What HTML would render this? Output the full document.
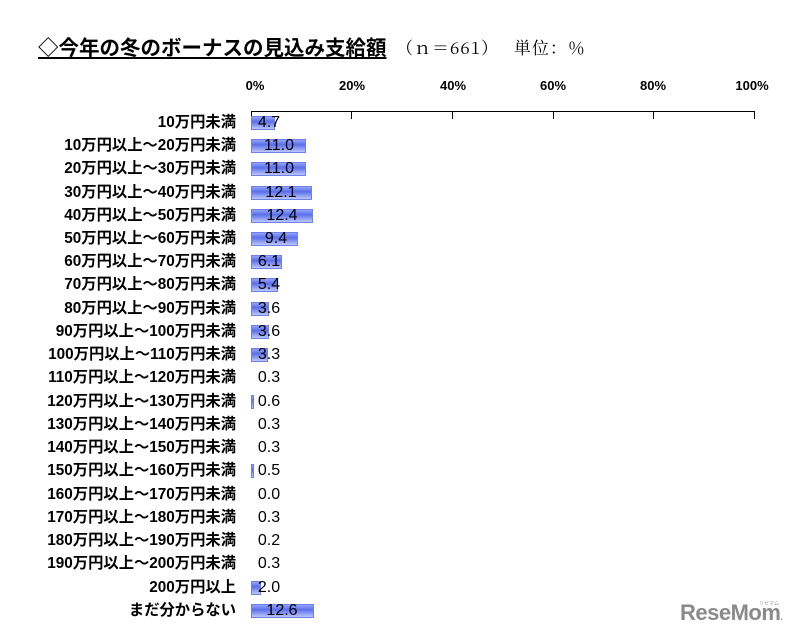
<!DOCTYPE html>
<html><head><meta charset="utf-8"><style>
body{margin:0;width:791px;height:637px;background:#fff;position:relative;overflow:hidden;font-family:"Liberation Sans","Noto Sans CJK JP",sans-serif;color:#000}
.a{position:absolute;white-space:nowrap}
.t{left:38px;top:31px;font-size:20.5px;font-weight:bold;text-decoration:underline;letter-spacing:0px}
.u{left:396px;top:34px;font-size:17px;letter-spacing:1px;font-family:"Noto Serif CJK SC","Liberation Serif",serif}
.x{top:78px;width:60px;text-align:center;font-size:13px;font-weight:bold;margin-left:-30px}
.l{right:555px;font-size:15.3px;font-weight:bold;line-height:16px}
.b{left:251px;height:14px;background:linear-gradient(#9fb0ff,#5a6eea 40%,#c9d2ff);box-shadow:inset 0 0 0 1px #6f80e8}
.v{width:60px;text-align:center;font-size:16px;line-height:16px}
.tk{position:absolute;top:111px;width:1px;height:8px;background:#000}
</style></head><body>
<div class="a t">◇今年の冬のボーナスの見込み支給額</div>
<div class="a u">（ｎ＝661）　 単位：％</div>
<div class="a x" style="left:255px">0%</div>
<div class="a x" style="left:352px">20%</div>
<div class="a x" style="left:453px">40%</div>
<div class="a x" style="left:553px">60%</div>
<div class="a x" style="left:653px">80%</div>
<div class="a x" style="left:752px">100%</div>
<div class="a" style="left:251px;top:111px;width:504px;height:1px;background:#000"></div>
<div class="tk" style="left:251px"></div><div class="tk" style="left:351px"></div><div class="tk" style="left:452px"></div><div class="tk" style="left:553px"></div><div class="tk" style="left:653px"></div><div class="tk" style="left:754px"></div>

<div class="a l" style="top:115px">10万円未満</div><div class="a b" style="top:116px;width:24px"></div><div class="a v" style="top:115px;left:239px">4.7</div>
<div class="a l" style="top:138px">10万円以上～20万円未満</div><div class="a b" style="top:139px;width:55px"></div><div class="a v" style="top:138px;left:249px">11.0</div>
<div class="a l" style="top:161px">20万円以上～30万円未満</div><div class="a b" style="top:162px;width:55px"></div><div class="a v" style="top:161px;left:249px">11.0</div>
<div class="a l" style="top:185px">30万円以上～40万円未満</div><div class="a b" style="top:186px;width:61px"></div><div class="a v" style="top:185px;left:251px">12.1</div>
<div class="a l" style="top:208px">40万円以上～50万円未満</div><div class="a b" style="top:209px;width:62px"></div><div class="a v" style="top:208px;left:252px">12.4</div>
<div class="a l" style="top:231px">50万円以上～60万円未満</div><div class="a b" style="top:232px;width:47px"></div><div class="a v" style="top:231px;left:246px">9.4</div>
<div class="a l" style="top:254px">60万円以上～70万円未満</div><div class="a b" style="top:255px;width:31px"></div><div class="a v" style="top:254px;left:239px">6.1</div>
<div class="a l" style="top:277px">70万円以上～80万円未満</div><div class="a b" style="top:278px;width:27px"></div><div class="a v" style="top:277px;left:239px">5.4</div>
<div class="a l" style="top:301px">80万円以上～90万円未満</div><div class="a b" style="top:302px;width:18px"></div><div class="a v" style="top:301px;left:239px">3.6</div>
<div class="a l" style="top:324px">90万円以上～100万円未満</div><div class="a b" style="top:325px;width:18px"></div><div class="a v" style="top:324px;left:239px">3.6</div>
<div class="a l" style="top:347px">100万円以上～110万円未満</div><div class="a b" style="top:348px;width:17px"></div><div class="a v" style="top:347px;left:239px">3.3</div>
<div class="a l" style="top:370px">110万円以上～120万円未満</div><div class="a v" style="top:370px;left:239px">0.3</div>
<div class="a l" style="top:394px">120万円以上～130万円未満</div><div class="a b" style="top:395px;width:3px"></div><div class="a v" style="top:394px;left:239px">0.6</div>
<div class="a l" style="top:417px">130万円以上～140万円未満</div><div class="a v" style="top:417px;left:239px">0.3</div>
<div class="a l" style="top:440px">140万円以上～150万円未満</div><div class="a v" style="top:440px;left:239px">0.3</div>
<div class="a l" style="top:463px">150万円以上～160万円未満</div><div class="a b" style="top:464px;width:3px"></div><div class="a v" style="top:463px;left:239px">0.5</div>
<div class="a l" style="top:487px">160万円以上～170万円未満</div><div class="a v" style="top:487px;left:239px">0.0</div>
<div class="a l" style="top:510px">170万円以上～180万円未満</div><div class="a v" style="top:510px;left:239px">0.3</div>
<div class="a l" style="top:533px">180万円以上～190万円未満</div><div class="a v" style="top:533px;left:239px">0.2</div>
<div class="a l" style="top:556px">190万円以上～200万円未満</div><div class="a v" style="top:556px;left:239px">0.3</div>
<div class="a l" style="top:580px">200万円以上</div><div class="a b" style="top:581px;width:10px"></div><div class="a v" style="top:580px;left:239px">2.0</div>
<div class="a l" style="top:603px">まだ分からない</div><div class="a b" style="top:604px;width:63px"></div><div class="a v" style="top:603px;left:252px">12.6</div>

<div class="a" style="left:680px;top:600px;font-size:22px;font-weight:bold;color:#8a8a8a;letter-spacing:-0.5px">ReseMom<span style="font-size:8px">.</span></div>
<div class="a" style="left:759px;top:600px;font-size:5px;color:#999">リセマム</div>
</body></html>
